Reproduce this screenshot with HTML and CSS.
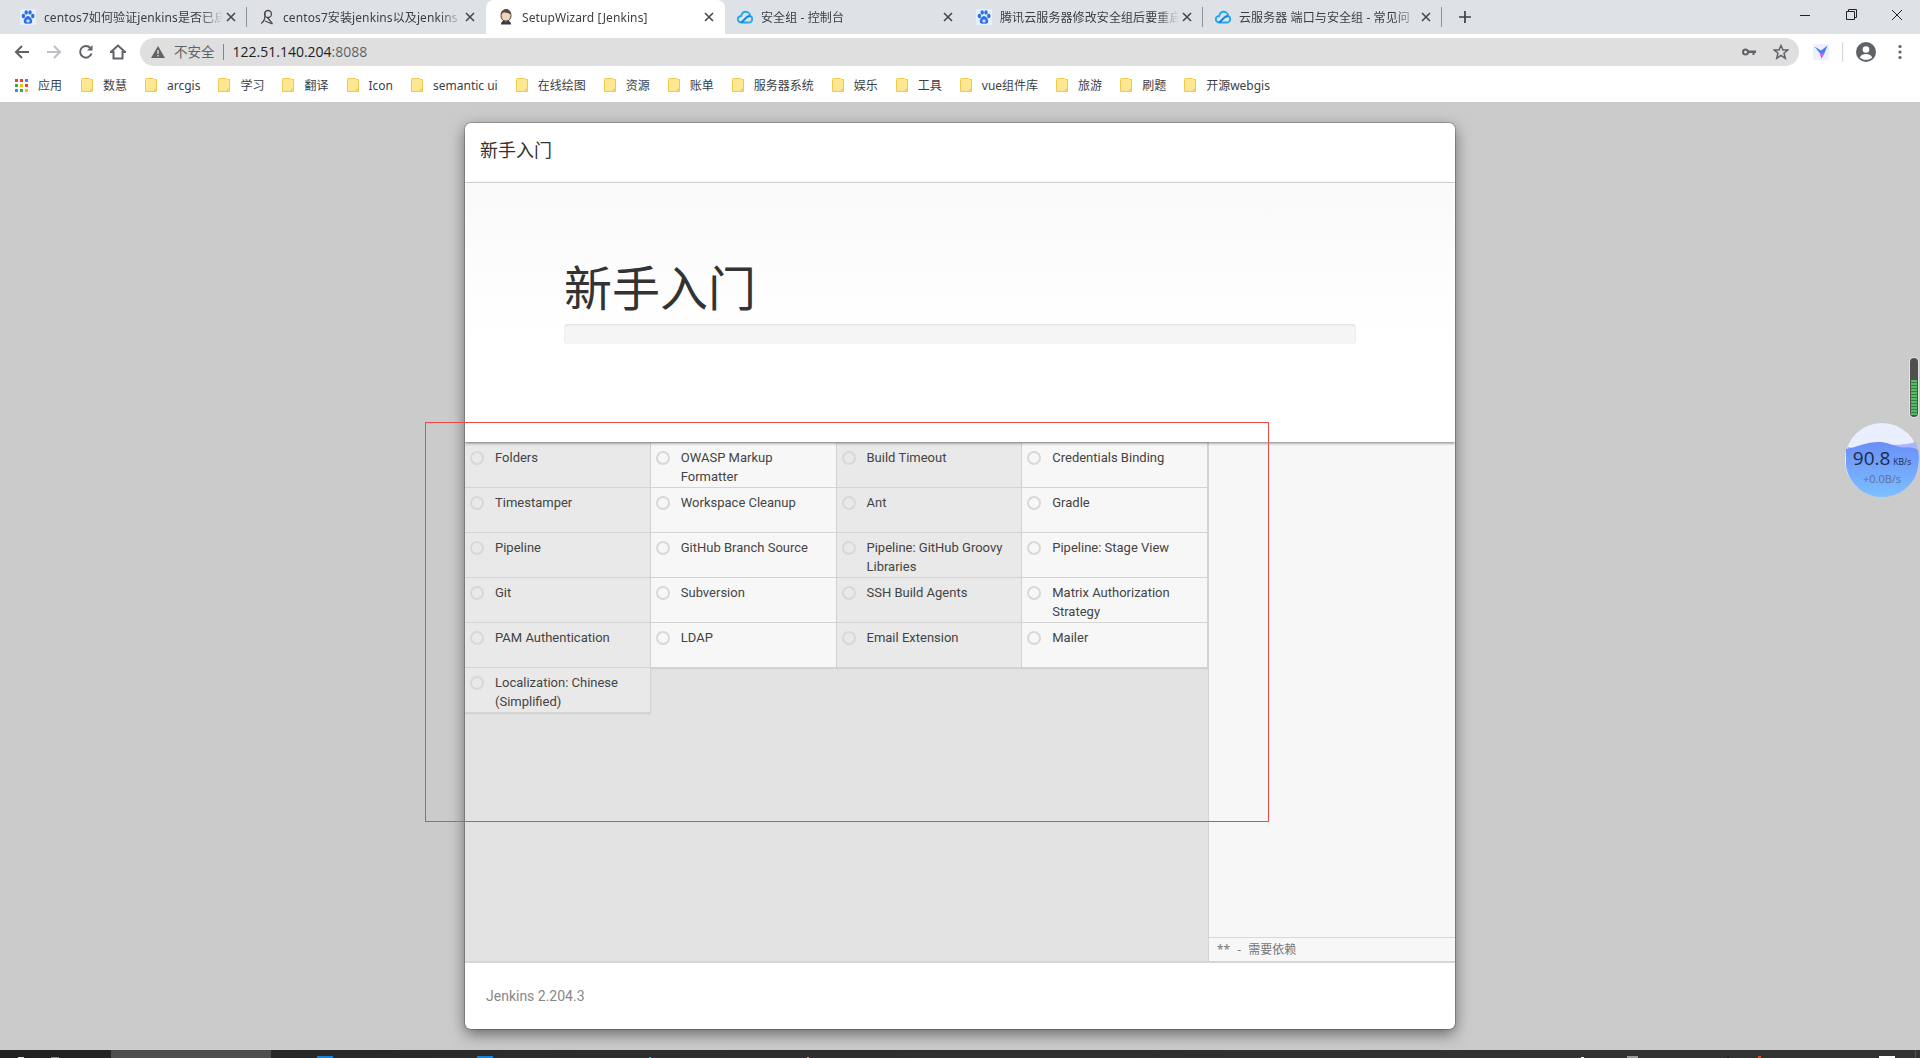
FILE: index.html
```html
<!DOCTYPE html>
<html lang="zh-CN">
<head>
  <meta charset="UTF-8" />
  <title>SetupWizard [Jenkins]</title>
  <link rel="stylesheet" href="styles.css">
</head>
<body>
  <svg class="sprites" width="0" height="0">
    <symbol id="paw" viewBox="0 0 16 16">
      <rect width="16" height="16" rx="1" fill="#e6effd"/>
      <ellipse cx="3.4" cy="7" rx="1.7" ry="2.2" fill="#2b6ee6"/>
      <ellipse cx="6.2" cy="3.4" rx="1.7" ry="2.2" fill="#2b6ee6"/>
      <ellipse cx="10" cy="3.4" rx="1.7" ry="2.2" fill="#2b6ee6"/>
      <ellipse cx="12.8" cy="7" rx="1.7" ry="2.2" fill="#2b6ee6"/>
      <path d="M8 7C6 7 3.8 10 3.8 12.4 3.8 14.6 6 15 8 14.4 10 15 12.2 14.6 12.2 12.4 12.2 10 10 7 8 7Z" fill="#2b6ee6"/>
      <rect x="6.3" y="10.5" width="3.4" height="3" rx="1.4" fill="#cfe0fb"/>
    </symbol>
    <symbol id="cloud" viewBox="0 0 16 16">
      <path d="M4.4 13.5C2.4 13.500 .8 12 .8 10.200 .8 8.400 2.400 7 4.200 7 4.800 4.400 6.600 2.800 8.800 2.800 11.200 2.800 13 4.800 13.200 7 14.400 7.400 15.200 8.600 15.200 10 15.200 12 13.600 13.500 11.600 13.500Z" fill="none" stroke="#22a7f0" stroke-width="1.900"/>
      <path d="M4.400 13.500 9.500 8.400C10.400 7.500 11.600 7.200 13.200 7" fill="none" stroke="#0a84dc" stroke-width="1.900"/>
    </symbol>
    <symbol id="x" viewBox="0 0 10 10">
      <path d="M1 1 9 9M9 1 1 9" stroke="#45484d" stroke-width="1.6"/>
    </symbol>
    <symbol id="folder" viewBox="0 0 12 14">
      <path d="M.5 1.500Q.5 .5 1.500 .5H8.500L9.500 1.500H11.500V13.500H.5Z" fill="#ffe792" stroke="#eec94f"/>
      <path d="M9.500 13V11.500H11" fill="none" stroke="#eec94f"/>
    </symbol>
    <symbol id="radio" viewBox="0 0 16 16">
      <circle cx="8" cy="8" r="6" fill="none" stroke="#d8d8d8" stroke-width="2"/>
    </symbol>
  </svg>

  <div class="tabstrip">
    <div class="tab">
      <svg class="favicon"><use href="#paw"/></svg>
      <span class="tab-title">centos7如何验证jenkins是否已启</span>
      <svg class="tab-close"><use href="#x"/></svg>
    </div>
    <div class="tab">
      <svg class="favicon" viewBox="0 0 16 16"><circle cx="9" cy="5" r="3.500" fill="none" stroke="#4c4c4c" stroke-width="1.300"/><path d="M2 14.500C5 13 6.500 9 6 3M8.500 8.500 13.500 15M13.500 15 6 12" fill="none" stroke="#4c4c4c" stroke-width="1.300"/></svg>
      <span class="tab-title">centos7安装jenkins以及jenkins</span>
      <svg class="tab-close"><use href="#x"/></svg>
    </div>
    <div class="tab active">
      <svg class="favicon" viewBox="0 0 16 16">
        <ellipse cx="8" cy="6.500" rx="5" ry="6" fill="#f0d6b7" stroke="#3c3c3c"/>
        <path d="M3 6C3 2 5 .5 8 .5 11 .5 13 2 13 5 10 4 7 3.500 5.500 3.500 4.500 4 4 5 3 6Z" fill="#5b4a42"/>
        <path d="M3 15.500C3 12.500 5 11.500 8 11.500 11 11.500 13 12.500 13 15.500Z" fill="#33393f"/>
        <path d="M6.500 12 8 14 9.500 12Z" fill="#d33833"/>
      </svg>
      <span class="tab-title">SetupWizard [Jenkins]</span>
      <svg class="tab-close"><use href="#x"/></svg>
    </div>
    <div class="tab">
      <svg class="favicon"><use href="#cloud"/></svg>
      <span class="tab-title">安全组 - 控制台</span>
      <svg class="tab-close"><use href="#x"/></svg>
    </div>
    <div class="tab">
      <svg class="favicon"><use href="#paw"/></svg>
      <span class="tab-title">腾讯云服务器修改安全组后要重启</span>
      <svg class="tab-close"><use href="#x"/></svg>
    </div>
    <div class="tab">
      <svg class="favicon"><use href="#cloud"/></svg>
      <span class="tab-title">云服务器 端口与安全组 - 常见问</span>
      <svg class="tab-close"><use href="#x"/></svg>
    </div>
    <svg class="newtab" viewBox="0 0 12 12"><path d="M6 0V12M0 6H12" stroke="#3c4043" stroke-width="1.7"/></svg>
    <div class="winctl">
      <svg viewBox="0 0 46 14"><path d="M18 7.500H28" stroke="#222" stroke-width="1"/></svg>
      <svg viewBox="0 0 46 14"><path d="M18.500 3.500H26.500V11.500H18.500ZM20.500 3.500V1.500H28.500V9.500H26.500" fill="none" stroke="#222"/></svg>
      <svg viewBox="0 0 46 14"><path d="M18 2 28 12M28 2 18 12" stroke="#222"/></svg>
    </div>
  </div>

  <div class="toolbar">
    <svg class="nav-icon" viewBox="0 0 16 16"><path d="M15 8H2M8 2 2 8 8 14" fill="none" stroke="#5f6368" stroke-width="2"/></svg>
    <svg class="nav-icon" viewBox="0 0 16 16"><path d="M1 8H14M8 2 14 8 8 14" fill="none" stroke="#bdc1c6" stroke-width="2"/></svg>
    <svg class="nav-icon" viewBox="0 0 16 16"><path d="M13.500 9.500A5.800 5.800 0 1 1 12.300 4" fill="none" stroke="#5f6368" stroke-width="2"/><path d="M14.500 1V6.500H9Z" fill="#5f6368"/></svg>
    <svg class="nav-icon" viewBox="0 0 16 16"><path d="M8 1.500 1 8H3.500V14.500H12.500V8H15Z" fill="none" stroke="#5f6368" stroke-width="2"/></svg>
    <div class="omnibox">
      <svg class="warn" viewBox="0 0 14 12"><path d="M7 0 14 12H0Z" fill="#5f6368"/><path d="M6.300 4H7.700V8H6.300ZM6.300 9H7.700V10.400H6.300Z" fill="#dfdfdf"/></svg>
      <span class="insecure">不安全</span>
      <span class="url">122.51.140.204<span class="url-port">:8088</span></span>
      <svg class="omni-key" viewBox="0 0 14 10"><circle cx="3.500" cy="5" r="2.500" fill="none" stroke="#5f6368" stroke-width="2"/><path d="M6 3.500H14V6H12.500V8H10.500V6H6Z" fill="#5f6368"/></svg>
      <svg class="omni-star" viewBox="0 0 16 16"><path d="M8 1.500 10 6H14.800L11 9.200 12.300 14.300 8 11.500 3.700 14.300 5 9.200 1.200 6H6Z" fill="none" stroke="#5f6368" stroke-width="1.500"/></svg>
    </div>
    <svg class="ext" viewBox="0 0 16 16"><rect width="16" height="16" rx="2" fill="#eef1fb"/><path d="M1.500 2.500 8 6.500 14.500 1.500 11.500 9 8.500 14.500 7 9.500Z" fill="#4f7df3"/><path d="M7 9.500 8.500 14.500 11.500 9Z" fill="#d65fd6"/></svg>
    <span class="tool-sep"></span>
    <svg class="profile" viewBox="0 0 20 20"><circle cx="10" cy="10" r="10" fill="#5f6368"/><circle cx="10" cy="7.500" r="3.300" fill="#fff"/><path d="M3.800 15.500C5 12.800 7.500 12 10 12 12.500 12 15 12.800 16.200 15.500 14.500 17 12.500 17.800 10 17.800 7.500 17.800 5.500 17 3.800 15.500Z" fill="#fff"/></svg>
    <svg class="menu" viewBox="0 0 4 16"><circle cx="2" cy="2.500" r="1.600" fill="#5f6368"/><circle cx="2" cy="8" r="1.600" fill="#5f6368"/><circle cx="2" cy="13.500" r="1.600" fill="#5f6368"/></svg>
  </div>

  <div class="bookmarks">
    <div class="bm bm-apps">
      <svg class="apps" viewBox="0 0 13 13">
        <rect width="3" height="3" fill="#ea4335"/><rect x="5" width="3" height="3" fill="#ea4335"/><rect x="10" width="3" height="3" fill="#4285f4"/>
        <rect y="5" width="3" height="3" fill="#34a853"/><rect x="5" y="5" width="3" height="3" fill="#fbbc05"/><rect x="10" y="5" width="3" height="3" fill="#ea4335"/>
        <rect y="10" width="3" height="3" fill="#4285f4"/><rect x="5" y="10" width="3" height="3" fill="#34a853"/><rect x="10" y="10" width="3" height="3" fill="#fbbc05"/>
      </svg>
      <span>应用</span>
    </div>
    <div class="bm"><svg class="folder"><use href="#folder"/></svg><span>数慧</span></div>
    <div class="bm"><svg class="folder"><use href="#folder"/></svg><span>arcgis</span></div>
    <div class="bm"><svg class="folder"><use href="#folder"/></svg><span>学习</span></div>
    <div class="bm"><svg class="folder"><use href="#folder"/></svg><span>翻译</span></div>
    <div class="bm"><svg class="folder"><use href="#folder"/></svg><span>Icon</span></div>
    <div class="bm"><svg class="folder"><use href="#folder"/></svg><span>semantic ui</span></div>
    <div class="bm"><svg class="folder"><use href="#folder"/></svg><span>在线绘图</span></div>
    <div class="bm"><svg class="folder"><use href="#folder"/></svg><span>资源</span></div>
    <div class="bm"><svg class="folder"><use href="#folder"/></svg><span>账单</span></div>
    <div class="bm"><svg class="folder"><use href="#folder"/></svg><span>服务器系统</span></div>
    <div class="bm"><svg class="folder"><use href="#folder"/></svg><span>娱乐</span></div>
    <div class="bm"><svg class="folder"><use href="#folder"/></svg><span>工具</span></div>
    <div class="bm"><svg class="folder"><use href="#folder"/></svg><span>vue组件库</span></div>
    <div class="bm"><svg class="folder"><use href="#folder"/></svg><span>旅游</span></div>
    <div class="bm"><svg class="folder"><use href="#folder"/></svg><span>刷题</span></div>
    <div class="bm"><svg class="folder"><use href="#folder"/></svg><span>开源webgis</span></div>
  </div>

  <div class="page">
    <div class="modal">
      <div class="modal-header">新手入门</div>
      <div class="jumbo">
        <h1>新手入门</h1>
        <div class="progress"></div>
      </div>
      <div class="install">
        <div class="plugins">
          <div class="plugin"><svg class="radio"><use href="#radio"/></svg><span>Folders</span></div>
          <div class="plugin"><svg class="radio"><use href="#radio"/></svg><span>OWASP Markup Formatter</span></div>
          <div class="plugin"><svg class="radio"><use href="#radio"/></svg><span>Build Timeout</span></div>
          <div class="plugin"><svg class="radio"><use href="#radio"/></svg><span>Credentials Binding</span></div>
          <div class="plugin"><svg class="radio"><use href="#radio"/></svg><span>Timestamper</span></div>
          <div class="plugin"><svg class="radio"><use href="#radio"/></svg><span>Workspace Cleanup</span></div>
          <div class="plugin"><svg class="radio"><use href="#radio"/></svg><span>Ant</span></div>
          <div class="plugin"><svg class="radio"><use href="#radio"/></svg><span>Gradle</span></div>
          <div class="plugin"><svg class="radio"><use href="#radio"/></svg><span>Pipeline</span></div>
          <div class="plugin"><svg class="radio"><use href="#radio"/></svg><span>GitHub Branch Source</span></div>
          <div class="plugin"><svg class="radio"><use href="#radio"/></svg><span>Pipeline: GitHub Groovy Libraries</span></div>
          <div class="plugin"><svg class="radio"><use href="#radio"/></svg><span>Pipeline: Stage View</span></div>
          <div class="plugin"><svg class="radio"><use href="#radio"/></svg><span>Git</span></div>
          <div class="plugin"><svg class="radio"><use href="#radio"/></svg><span>Subversion</span></div>
          <div class="plugin"><svg class="radio"><use href="#radio"/></svg><span>SSH Build Agents</span></div>
          <div class="plugin"><svg class="radio"><use href="#radio"/></svg><span>Matrix Authorization Strategy</span></div>
          <div class="plugin"><svg class="radio"><use href="#radio"/></svg><span>PAM Authentication</span></div>
          <div class="plugin"><svg class="radio"><use href="#radio"/></svg><span>LDAP</span></div>
          <div class="plugin"><svg class="radio"><use href="#radio"/></svg><span>Email Extension</span></div>
          <div class="plugin"><svg class="radio"><use href="#radio"/></svg><span>Mailer</span></div>
          <div class="plugin"><svg class="radio"><use href="#radio"/></svg><span>Localization: Chinese (Simplified)</span></div>
        </div>
        <div class="details">
          <div class="details-log"></div>
          <div class="details-note">** - 需要依赖</div>
        </div>
      </div>
      <div class="modal-footer">Jenkins 2.204.3</div>
    </div>

    <div class="marker"></div>

    <div class="meter">
      <div class="meter-fill"></div>
    </div>
    <div class="speed">
      <svg class="speed-bg" viewBox="0 0 74 74">
        <defs>
          <linearGradient id="water" x1="0" y1="0" x2="0" y2="1">
            <stop offset="0" stop-color="#6a8ef8"/>
            <stop offset="1" stop-color="#7cc0ff"/>
          </linearGradient>
        </defs>
        <circle cx="37" cy="37" r="37" fill="#e9efff"/>
        <path d="M3 24C14 27 26 24 38 22 50 22 60 22 71 19 75 30 74 52 66 60 55 74 40 74 37 74 20 74 4 62 1 42Z" fill="#a9b6f8"/>
        <path d="M1 26C12 24 24 18 36 19 46 20 52 25 60 24.500 65 24 70 25 73 27 75 34 74 52 66 60 55 74 40 74 37 74 20 74 4 62 1 42Z" fill="url(#water)"/>
      </svg>
      <div class="speed-main">90.8<small>KB/s</small></div>
      <div class="speed-sub">+0.0B/s</div>
    </div>
  </div>

  <div class="taskbar">
    <span class="bit bit-start"></span>
    <span class="bit bit-search"></span>
    <span class="task-active"></span>
    <span class="bit bit-blue-a"></span>
    <span class="bit bit-blue-b"></span>
    <span class="bit bit-cyan"></span>
    <span class="bit bit-pink"></span>
    <span class="bit bit-tray-a"></span>
    <span class="bit bit-tray-b"></span>
    <span class="bit bit-tray-c"></span>
    <span class="bit bit-tray-d"></span>
    <span class="bit bit-tray-e"></span>
    <span class="bit bit-tray-f"></span>
  </div>
</body>
</html>
```

FILE: styles.css
```css
html, body {
  margin: 0;
  height: 100%;
  overflow: hidden;
}
body {
  display: flex;
  flex-direction: column;
  background: #cbcbcb;
  font-family: "Noto Sans", "Noto Sans CJK SC", sans-serif;
  color: #333;
}
.sprites { position: absolute; }

/* browser chrome */
.tabstrip {
  display: flex;
  align-items: center;
  height: 34px;
  background: #dee1e6;
  padding-left: 8px;
  flex-shrink: 0;
}
.tab {
  display: flex;
  align-items: center;
  width: 239px;
  height: 34px;
  box-sizing: border-box;
  padding: 0 8px 0 12px;
  position: relative;
  flex-shrink: 0;
}
.tab::after {
  content: "";
  position: absolute;
  right: 0;
  top: 7px;
  height: 20px;
  width: 1px;
  background: #8e9196;
}
.tab:nth-child(2)::after, .tab.active::after, .tab:nth-child(4)::after { display: none; }
.tab.active {
  background: #fff;
  border-radius: 8px 8px 0 0;
}
.favicon {
  width: 16px;
  height: 16px;
  flex-shrink: 0;
}
.tab-title {
  flex: 1;
  margin: 0 3px 0 8px;
  font-size: 12px;
  letter-spacing: .1px;
  color: #3c4043;
  white-space: nowrap;
  overflow: hidden;
  -webkit-mask-image: linear-gradient(90deg, #000 88%, transparent);
  mask-image: linear-gradient(90deg, #000 88%, transparent);
}
.tab-close {
  width: 10px;
  height: 10px;
  margin-right: 3px;
  flex-shrink: 0;
}
.newtab {
  width: 12px;
  height: 12px;
  margin-left: 17px;
}
.winctl {
  display: flex;
  margin-left: auto;
  align-self: flex-start;
  padding-top: 8px;
}
.winctl svg {
  width: 46px;
  height: 14px;
}

.toolbar {
  display: flex;
  align-items: center;
  height: 36px;
  background: #fff;
  padding: 0 13px 0 14px;
  box-sizing: border-box;
  flex-shrink: 0;
}
.nav-icon {
  width: 16px;
  height: 16px;
  margin-right: 16px;
}
.omnibox {
  display: flex;
  align-items: center;
  width: 1659px;
  height: 28px;
  margin-left: -2px;
  background: #dfdfdf;
  border-radius: 14px;
  padding: 0 10px 0 11px;
  box-sizing: border-box;
}
.warn { width: 14px; height: 12px; }
.insecure {
  margin-left: 9px;
  padding-right: 8px;
  color: #5f6368;
  font-size: 13.5px;
  border-right: 1px solid #80868b;
  line-height: 16px;
}
.url {
  margin-left: 9px;
  padding-bottom: 2px;
  color: #202124;
  font-size: 14px;
  font-family: "Open Sans", sans-serif;
}
.url-port { color: #5f6368; }
.omni-key {
  width: 14px;
  height: 10px;
  margin-left: auto;
}
.omni-star {
  width: 16px;
  height: 16px;
  margin-left: 17px;
}
.ext {
  width: 16px;
  height: 16px;
  margin-left: 14px;
}
.tool-sep {
  width: 1px;
  height: 20px;
  background: #d5d5d5;
  margin: 0 13px;
}
.profile {
  width: 20px;
  height: 20px;
}
.menu {
  width: 4px;
  height: 16px;
  margin-left: 22px;
}

.bookmarks {
  display: flex;
  align-items: center;
  height: 32px;
  box-sizing: border-box;
  padding: 0 0 2px 15px;
  background: #fff;
  font-size: 12px;
  color: #3c4043;
  flex-shrink: 0;
}
.bm {
  display: flex;
  align-items: center;
  gap: 10px;
  margin-right: 18px;
}
.bm-apps { margin-right: 19px; }
.apps { width: 13px; height: 13px; }
.folder { width: 12px; height: 14px; }

/* page */
.page {
  flex: 1;
  position: relative;
  display: flex;
  justify-content: center;
  align-items: flex-start;
  min-height: 0;
}
.modal {
  display: flex;
  flex-direction: column;
  width: 990px;
  height: 906px;
  margin-top: 21px;
  background: #fff;
  border-radius: 6px;
  box-shadow: 0 5px 15px rgba(0, 0, 0, .5), 0 0 0 1px rgba(0, 0, 0, .2);
  overflow: hidden;
}
.modal-header {
  height: 59px;
  line-height: 54px;
  padding-left: 15px;
  font-size: 18px;
  color: #333;
  border-bottom: 1px solid #e5e5e5;
  flex-shrink: 0;
}
.jumbo {
  height: 259px;
  box-sizing: border-box;
  padding: 69px 99px 0;
  background: linear-gradient(#f9f9f9, #fff 60%);
  flex-shrink: 0;
  position: relative;
  z-index: 1;
  box-shadow: 0 1px 3px rgba(0, 0, 0, .5);
}
.jumbo h1 {
  margin: 0;
  font-size: 48px;
  font-weight: 400;
  line-height: 72px;
  color: #333;
}
.progress {
  height: 20px;
  background: #f5f5f5;
  border-radius: 4px;
  box-shadow: inset 0 1px 2px rgba(0, 0, 0, .1);
}
.install {
  flex: 1;
  display: flex;
  background: #e3e3e3;
  min-height: 0;
}
.plugins {
  width: 743px;
  display: grid;
  grid-template-columns: repeat(4, 1fr);
  grid-auto-rows: 45px;
  align-content: start;
  padding-top: 1px;
  font-family: Roboto, sans-serif;
  font-size: 13px;
  line-height: 19px;
  color: #444;
}
.plugin {
  display: flex;
  align-items: flex-start;
  gap: 10px;
  box-sizing: border-box;
  padding: 5px 16px 0 4px;
  background: #e9e9e9;
  border-right: 1px solid #d4d4d4;
  border-bottom: 1px solid #d4d4d4;
  box-shadow: 0 1px 1px rgba(0, 0, 0, .08);
}
.plugin:nth-child(even) { background: #f7f7f7; }
.radio {
  width: 16px;
  height: 16px;
  margin-top: 2px;
  flex-shrink: 0;
}
.details {
  flex: 1;
  display: flex;
  flex-direction: column;
  background: #f7f7f7;
  border-left: 1px solid #d4d4d4;
}
.details-log { flex: 1; }
.details-note {
  height: 22px;
  padding: 1px 0 0 8px;
  line-height: 22px;
  font-size: 12px;
  word-spacing: 4px;
  color: #777;
  border-top: 1px solid #d8d8d8;
}
.modal-footer {
  height: 68px;
  line-height: 66px;
  padding-left: 21px;
  font-family: Roboto, sans-serif;
  font-size: 14px;
  color: #888;
  border-top: 2px solid #d6d6d6;
  box-sizing: border-box;
  flex-shrink: 0;
}

/* screenshot annotation */
.marker {
  position: absolute;
  z-index: 2;
  left: 425px;
  top: 320px;
  width: 842px;
  height: 398px;
  border: 1px solid #f04747;
}

/* network speed widget */
.meter {
  position: absolute;
  left: 1910px;
  top: 256px;
  width: 8px;
  height: 59px;
  background: #4f4f4f;
  border-radius: 4px;
  box-shadow: 0 0 0 1px #e4e4e4;
  overflow: hidden;
}
.meter-fill {
  position: absolute;
  left: 1px;
  right: 1px;
  top: 22px;
  bottom: 2px;
  background: repeating-linear-gradient(#4fc060 0 2px, #3a7a48 2px 3px);
}
.speed {
  position: absolute;
  left: 1845px;
  top: 321px;
  width: 74px;
  height: 74px;
  text-align: center;
  font-family: "Open Sans", sans-serif;
}
.speed-bg {
  position: absolute;
  left: 0;
  top: 0;
  width: 74px;
  height: 74px;
}
.speed-main {
  position: relative;
  padding-top: 24px;
  font-size: 19px;
  line-height: 22px;
  color: #1f2a44;
  white-space: nowrap;
}
.speed-main small {
  font-size: 8.500px;
  margin-left: 3px;
}
.speed-sub {
  position: relative;
  font-size: 11px;
  line-height: 12px;
  color: #5f6f95;
}

.taskbar {
  display: flex;
  align-items: flex-end;
  height: 8px;
  background: linear-gradient(90deg, #1e2022, #2d2d2d 30%, #333 100%);
  flex-shrink: 0;
}
.task-active {
  align-self: stretch;
  width: 160px;
  margin-left: 52px;
  background: #4c4e4f;
}
.bit {
  height: 1px;
  width: 6px;
  background: #ddd;
}
.bit-start { margin-left: 18px; }
.bit-search { margin-left: 27px; width: 8px; background: #888; }
.bit-blue-a { margin-left: 46px; width: 16px; height: 2px; background: #1683d8; }
.bit-blue-b { margin-left: 144px; width: 16px; height: 2px; background: #1683d8; }
.bit-cyan { margin-left: 156px; width: 2px; background: #3ab4d8; }
.bit-pink { margin-left: 156px; width: 2px; background: #c98; }
.bit-tray-a { margin-left: 772px; width: 3px; background: #fff; }
.bit-tray-b { margin-left: 43px; width: 11px; height: 2px; background: #999; }
.bit-tray-c { margin-left: 89px; width: 2px; background: #111; }
.bit-tray-d { margin-left: 29px; width: 3px; height: 2px; background: #d5521c; }
.bit-tray-e { margin-left: 118px; width: 16px; height: 2px; background: #fff; }
.bit-tray-f { margin-left: 20px; width: 1px; height: 8px; background: #555; }
```
